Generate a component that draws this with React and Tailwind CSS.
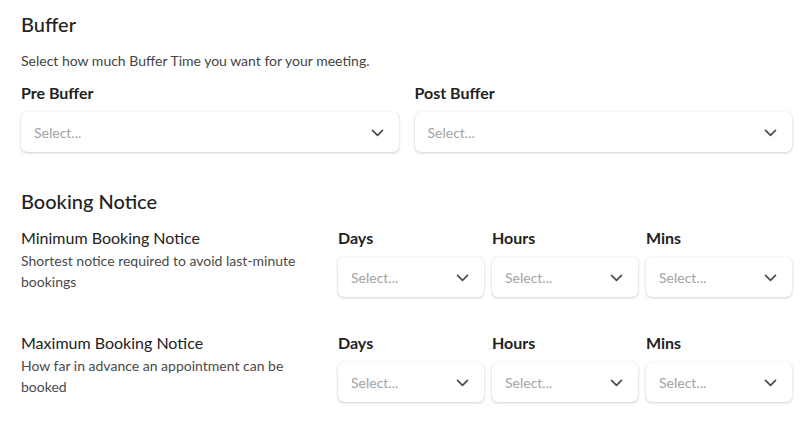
import React from "react";

const Chevron = () => (
  <svg width="17" height="17" viewBox="0 0 24 24" fill="none" stroke="#4b4b4b" strokeWidth="2.4" strokeLinecap="round" strokeLinejoin="round">
    <path d="M5 9l7 7 7-7" />
  </svg>
);

const Select = () => (
  <div className="flex h-[40px] items-center justify-between rounded-[6px] bg-white pl-[13px] pr-[13px] shadow-[0_1px_3px_rgba(0,0,0,0.18),0_0_1px_rgba(0,0,0,0.12)]">
    <span className="text-[14px] text-[#a3a3a3]">Select...</span>
    <Chevron />
  </div>
);

const Field = ({ label }) => (
  <div className="flex flex-col">
    <div className="h-[20px] text-[16px] leading-[20px] font-bold text-[#222]">{label}</div>
    <div className="mt-[9px]">
      <Select />
    </div>
  </div>
);

const NoticeRow = ({ title, desc }) => (
  <div className="flex">
    <div className="w-[317px] shrink-0 pr-[30px]">
      <div className="h-[20px] text-[16px] leading-[20px] text-[#222]">{title}</div>
      <div className="mt-[2px] text-[14px] leading-[21px] text-[#4a4a4a]">{desc}</div>
    </div>
    <div className="grid flex-1 grid-cols-3 gap-[8px]">
      <Field label="Days" />
      <Field label="Hours" />
      <Field label="Mins" />
    </div>
  </div>
);

export default function App() {
  return (
    <div className="h-[432px] w-[805px] bg-white pl-[21px] pr-[13px] pt-[10px]" style={{ fontFamily: "Lato, 'Open Sans', sans-serif" }}>
      <h2 className="h-[28px] text-[20px] leading-[28px] font-medium text-[#222]">Buffer</h2>
      <p className="mt-[13px] text-[14px] leading-[20px] text-[#444]">Select how much Buffer Time you want for your meeting.</p>
      <div className="mt-[12px] grid grid-cols-2 gap-[16px]">
        <Field label="Pre Buffer" />
        <Field label="Post Buffer" />
      </div>
      <h2 className="mt-[35px] h-[28px] text-[20px] leading-[28px] font-medium text-[#222]">Booking Notice</h2>
      <div className="mt-[13px]">
        <NoticeRow title="Minimum Booking Notice" desc="Shortest notice required to avoid last-minute bookings" />
      </div>
      <div className="mt-[36px]">
        <NoticeRow title="Maximum Booking Notice" desc="How far in advance an appointment can be booked" />
      </div>
    </div>
  );
}
